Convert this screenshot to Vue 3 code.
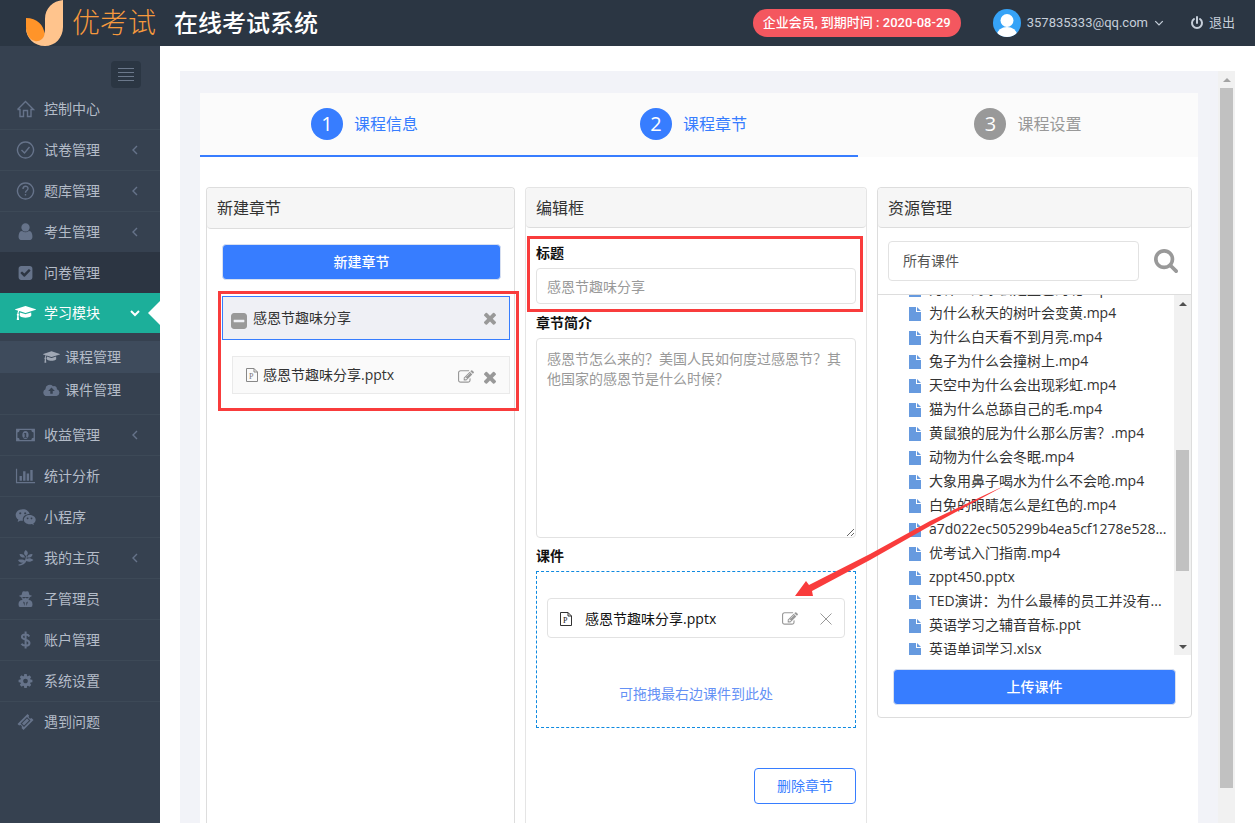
<script setup>
import { ref } from 'vue'

const icons = {
  home: { box: '0 0 18 18', line: true, d: 'M1 9.5 9 1.5l8 8H14.500V16.500H11V10.500H7V16.500H3.500V9.500H1' },
  circleCheck: { box: '0 0 18 18', line: true, d: 'M9 1a8 8 0 1 0 .01 0M5 9l3 3 5-6' },
  circleHelp: { box: '0 0 18 18', line: true, d: 'M9 1a8 8 0 1 0 .01 0M6.500 7c0-3.500 5-3.500 5-.5 0 2-2.500 2-2.500 4.200M9 12v1.600' },
  user: { box: '128 100 1536 1664', d: 'M1536 1399q0 109-62.500 187t-150.500 78h-854q-88 0-150.500-78t-62.500-187q0-85 8.500-160.500t31.500-152 58.500-131 94-89 134.500-34.500q131 128 313 128t313-128q76 0 134.500 34.500t94 89 58.500 131 31.500 152 8.500 160.500zm-256-887q0 159-112.500 271.500t-271.500 112.500-271.500-112.500-112.500-271.500 112.500-271.500 271.500-112.500 271.500 112.500 112.500 271.500z' },
  checkSquare: { box: '-104 -104 2000 2000', d: 'M813 1299l614-614q19-19 19-45t-19-45l-102-102q-19-19-45-19t-45 19l-467 467-211-211q-19-19-45-19t-45 19l-102 102q-19 19-19 45t19 45l358 358q19 19 45 19t45-19zm851-883v960q0 119-84.500 203.500t-203.500 84.500h-960q-119 0-203.500-84.500t-84.500-203.500v-960q0-119 84.500-203.500t203.500-84.500h960q119 0 203.500 84.500t84.500 203.500z' },
  minusSquare: { box: '128 128 1536 1536', d: 'M1408 960v-128q0-26-19-45t-45-19h-896q-26 0-45 19t-19 45v128q0 26 19 45t45 19h896q26 0 45-19t19-45zm256-544v960q0 119-84.500 203.500t-203.500 84.500h-960q-119 0-203.500-84.500t-84.500-203.500v-960q0-119 84.500-203.500t203.500-84.500h960q119 0 203.500 84.500t84.500 203.500z' },
  cap: { box: '0 0 2304 1792', d: 'M1774 836l18 316q4 69-82 128t-235 93.500-323 34.500-323-34.500-235-93.500-82-128l18-316 574 181q22 7 48 7t48-7zm530-324q0 23-22 31l-1120 352q-4 1-10 1t-10-1l-652-206q-43 34-71 111.500t-34 178.500q63 36 63 109 0 69-58 107l58 433q2 14-8 25-9 11-24 11h-192q-15 0-24-11-10-11-8-25l58-433q-58-38-58-107 0-73 65-111 11-207 98-330l-333-104q-22-8-22-31t22-31l1120-352q4-1 10-1t10 1l1120 352q22 8 22 31z' },
  cloud: { box: '0 0 18 14', d: 'M14.700 6.100A3 3 0 0 0 10.600 3 4.600 4.600 0 0 0 2.600 6.200 3.700 3.700 0 0 0 4 13.300H14.300A3.700 3.700 0 0 0 14.700 6.100ZM7.700 11V8H5.500L9 4.300 12.500 8H10.300V11Z' },
  money: { box: '0 0 20 14', d: 'M1 1H19V13H1ZM4.500 2.300A2.300 2.300 0 0 1 2.300 4.500V9.500A2.300 2.300 0 0 1 4.500 11.700H15.500A2.300 2.300 0 0 1 17.700 9.500V4.500A2.300 2.300 0 0 1 15.500 2.300ZM10 3.200C14 3.200 14 10.800 10 10.800S6 3.200 10 3.200ZM9.200 5L8 6.200 9.200 6V8.800H8.300V9.600H11.700V8.800H10.700V5Z' },
  chart: { box: '-100 0 2248 1792', d: 'M640 896v512h-256v-512h256zm384-512v1024h-256v-1024h256zm1024 1152v128h-2048v-1536h128v1408h1920zm-640-896v768h-256v-768h256zm384-384v1152h-256v-1152h256z' },
  chat: { box: '0 0 20 17', d: 'M7.500 1C11 1 13.500 3 14 5.700 9.800 5.700 6.600 8.700 7.600 12L5 12 2.500 13.300 3.200 11C-1.500 8 .5 1 7.500 1ZM5 4A1 1 0 1 0 5.010 4ZM9.700 4A1 1 0 1 0 9.710 4ZM13.800 6.500C20 6.500 21.500 12.500 17.500 14.500L18 16.200 16 15.200C11.500 16.200 8.300 13.500 8.400 11 8.500 8.500 10.800 6.500 13.800 6.500ZM12 8.900A.8.8 0 1 0 12.010 8.900ZM15.700 8.900A.8.8 0 1 0 15.710 8.900Z' },
  leaf: { box: '0 0 18 18', d: 'M9.300 1C12 3 12 5 9.800 7 7 5.500 7 3 9.300 1ZM3 5C6 4.500 8 6 8.500 8.500 5.500 9 3.500 8 3 5ZM16 5C15.800 8 13.500 9 10.600 8.500 11 6 13 4.800 16 5ZM9.600 7 10.300 7 10.200 10C12 8.700 14.500 9 17 11 14.500 13 12 13.200 9.800 12 9 14.500 6 16.500 2 16.500L2 15.500C4 15.300 5.500 14.700 6.500 13.600 4.500 14 2.500 13.200 1.500 11 4.500 10 7 10.600 8.500 11.500Z' },
  spy: { box: '0 0 18 18', d: 'M5 5 6 1.800Q6.500 .8 9 1.600 11.500 .8 12 1.800L13 5Q15.500 5.400 15.500 6 13 7.300 13 7.500 12.700 9.300 11.800 10 16 9.800 16 14.500 16 17 14.500 17H3.500Q2 17 2 14.500 2 9.800 6.200 10 5.300 9.300 5 7.500 5 7.300 2.500 6 2.500 5.400 5 5ZM6.500 11.500 8 16 8.300 12.500ZM11.500 11.500 9.700 12.500 10 16ZM6 7V8.300H8.200L9 7.500 9.800 8.300H12V7Z' },
  dollar: { box: '0 0 18 18', line: true, d: 'M12.800 5.500C11.500 3 5.400 2.800 5.400 6 5.400 9.200 13 8 13 12 13 15.500 6.500 15.500 5 12.800M9.100 .5V17.500' },
  cog: { box: '-104 -104 2000 2000', d: 'M1152 896q0-106-75-181t-181-75-181 75-75 181 75 181 181 75 181-75 75-181zm512-109v222q0 12-8 23t-20 13l-185 28q-19 54-39 91 35 50 107 138 10 12 10 25t-9 23q-27 37-99 108t-94 71q-12 0-26-9l-138-108q-44 23-91 38-16 136-29 186-7 28-36 28h-222q-14 0-24.500-8.500t-11.500-21.500l-28-184q-49-16-90-37l-141 107q-10 9-25 9-14 0-25-11-126-114-165-168-7-10-7-23 0-12 8-23 15-21 51-66.500t54-70.500q-27-50-41-99l-183-27q-13-2-21-12.500t-8-23.500v-222q0-12 8-23t19-13l186-28q14-46 39-92-40-57-107-138-10-12-10-24 0-10 9-23 26-36 98.500-107.500t94.500-71.500q13 0 26 10l138 107q44-23 91-38 16-136 29-186 7-28 36-28h222q14 0 24.500 8.500t11.500 21.500l28 184q49 16 90 37l142-107q9-9 24-9 13 0 25 10 129 119 165 170 7 8 7 22 0 12-8 23-15 21-51 66.500t-54 70.500q26 50 41 98l183 28q13 2 21 12.500t8 23.500z' },
  ticket: { box: '0 0 18 18', d: 'M11 1 12.600 2.600A1.700 1.700 0 0 0 15 5L17 7 7 17 5 15A1.700 1.700 0 0 0 2.600 12.600L1 11ZM10.500 4 4 10.500 7.500 14 14 7.500ZM10.500 5.500 12.500 7.500 7.500 12.500 5.500 10.500Z' },
  edit: { box: '0 0 1792 1792', d: 'M888 1184l116-116-152-152-116 116v56h96v96h56zm440-720q-16-16-33 1l-350 350q-17 17-1 33t33-1l350-350q17-17 1-33zm80 594v190q0 119-84.500 203.500t-203.500 84.500h-832q-119 0-203.500-84.500t-84.500-203.500v-832q0-119 84.500-203.500t203.500-84.500h832q63 0 117 25 15 7 18 23 3 17-9 29l-49 49q-14 14-32 8-23-6-45-6h-832q-66 0-113 47t-47 113v832q0 66 47 113t113 47h832q66 0 113-47t47-113v-126q0-13 9-22l64-64q15-15 35-7t20 29zm-96-738l288 288-672 672h-288v-288zm444 132l-92 92-288-288 92-92q28-28 68-28t68 28l152 152q28 28 28 68t-28 68z' },
  times: { box: '302 302 1188 1252', d: 'M1490 1322q0 40-28 68l-136 136q-28 28-68 28t-68-28l-294-294-294 294q-28 28-68 28t-68-28l-136-136q-28-28-28-68t28-68l294-294-294-294q-28-28-28-68t28-68l136-136q28-28 68-28t68 28l294 294 294-294q28-28 68-28t68 28l136 136q28 28 28 68t-28 68l-294 294 294 294q28 28 28 68z' },
  search: { box: '64 128 1664 1664', d: 'M1216 832q0-185-131.500-316.500t-316.500-131.500-316.500 131.500-131.500 316.500 131.500 316.500 316.500 131.500 316.500-131.500 131.500-316.500zm512 832q0 52-38 90t-90 38q-54 0-90-38l-343-342q-179 124-399 124-143 0-273.500-55.500t-225-150-150-225-55.500-273.500 55.500-273.500 150-225 225-150 273.500-55.500 273.500 55.500 225 150 150 225 55.500 273.500q0 220-124 399l343 343q37 37 37 90z' },
}

const menu = [
  { text: '控制中心', icon: 'home' },
  { text: '试卷管理', icon: 'circleCheck', more: true },
  { text: '题库管理', icon: 'circleHelp', more: true },
  { text: '考生管理', icon: 'user', more: true },
  { text: '问卷管理', icon: 'checkSquare', dark: true },
  {
    text: '学习模块', icon: 'cap', active: true,
    children: [
      { text: '课程管理', icon: 'cap', current: true },
      { text: '课件管理', icon: 'cloud' },
    ],
  },
  { text: '收益管理', icon: 'money', more: true },
  { text: '统计分析', icon: 'chart' },
  { text: '小程序', icon: 'chat' },
  { text: '我的主页', icon: 'leaf', more: true },
  { text: '子管理员', icon: 'spy' },
  { text: '账户管理', icon: 'dollar' },
  { text: '系统设置', icon: 'cog' },
  { text: '遇到问题', icon: 'ticket' },
]

const steps = [
  { text: '课程信息', done: true },
  { text: '课程章节', done: true },
  { text: '课程设置', done: false },
]

const files = [
  '为什么海水会是蓝色的呢.mp4',
  '为什么秋天的树叶会变黄.mp4',
  '为什么白天看不到月亮.mp4',
  '兔子为什么会撞树上.mp4',
  '天空中为什么会出现彩虹.mp4',
  '猫为什么总舔自己的毛.mp4',
  '黄鼠狼的屁为什么那么厉害？.mp4',
  '动物为什么会冬眠.mp4',
  '大象用鼻子喝水为什么不会呛.mp4',
  '白兔的眼睛怎么是红色的.mp4',
  'a7d022ec505299b4ea5cf1278e528...',
  '优考试入门指南.mp4',
  'zppt450.pptx',
  'TED演讲：为什么最棒的员工并没有...',
  '英语学习之辅音音标.ppt',
  '英语单词学习.xlsx',
]

const title = ref('感恩节趣味分享')
const intro = ref('感恩节怎么来的？美国人民如何度过感恩节？其他国家的感恩节是什么时候？')
</script>

<template>
  <div class="page">
    <header class="topbar">
      <a class="brand" href="#">
        <svg class="logo" viewBox="0 0 38 46" aria-hidden="true">
          <path fill="#ffc48d" d="M37 0V27C37 38 29 46 19 46C8 46 0 38 0 28C4 37 19 42 19 29V19C19 8 27 1 37 0Z" />
          <path fill="#ff9429" d="M0 18C11 18 18 25 18.500 34C18 39 13 42 9 41C3 40 0 33 0 27Z" />
        </svg>
        <span class="brand-name">优考试</span>
      </a>
      <h1>在线考试系统</h1>
      <span class="plan">企业会员, 到期时间 : 2020-08-29</span>
      <button class="account" type="button">
        <svg class="avatar" viewBox="0 0 28 28" aria-hidden="true">
          <defs><clipPath id="face"><circle cx="14" cy="14" r="14" /></clipPath></defs>
          <g clip-path="url(#face)">
            <rect width="28" height="28" fill="#36a3f7" />
            <circle cx="14" cy="11.500" r="6.500" fill="#fff" />
            <ellipse cx="14" cy="26" rx="10" ry="8" fill="#fff" />
          </g>
        </svg>
        <span>357835333@qq.com</span>
        <svg class="caret" viewBox="0 0 8 8" aria-hidden="true"><path d="M1 2.500 4 5.500 7 2.500" /></svg>
      </button>
      <a class="logout" href="#">
        <svg viewBox="0 0 14 14" aria-hidden="true"><path d="M4 3A5 5 0 1 0 10 3M7 1V7" /></svg>
        退出
      </a>
    </header>

    <div class="body">
      <nav class="sidebar" aria-label="主菜单">
        <button class="toggle" type="button" aria-label="折叠菜单"><i></i><i></i><i></i><i></i></button>
        <ul class="menu">
          <li v-for="item in menu" :key="item.text" :class="{ active: item.active, dark: item.dark }">
            <a class="entry" href="#">
              <svg class="icon" :class="{ line: icons[item.icon].line, ['i-' + item.icon]: true }" :viewBox="icons[item.icon].box" aria-hidden="true">
                <path :d="icons[item.icon].d" fill-rule="evenodd" />
              </svg>
              <span>{{ item.text }}</span>
              <svg v-if="item.more" class="arrow" viewBox="0 0 10 10" aria-hidden="true"><path d="M7 1 3 5 7 9" /></svg>
              <svg v-if="item.active" class="arrow" viewBox="0 0 10 10" aria-hidden="true"><path d="M1 3 5 7 9 3" /></svg>
            </a>
            <ul v-if="item.children" class="submenu">
              <li v-for="sub in item.children" :key="sub.text">
                <a href="#" :class="{ current: sub.current }">
                  <svg class="sub-icon" :viewBox="icons[sub.icon].box" aria-hidden="true"><path :d="icons[sub.icon].d" fill-rule="evenodd" /></svg>
                  {{ sub.text }}
                </a>
              </li>
            </ul>
          </li>
        </ul>
      </nav>

      <main class="frame">
        <div class="content">
          <ol class="steps">
            <li v-for="(step, i) in steps" :key="step.text" :class="{ done: step.done }">
              <b>{{ i + 1 }}</b>{{ step.text }}
            </li>
          </ol>

          <div class="columns">
            <section class="panel chapters">
              <h2>新建章节</h2>
              <button class="primary" type="button">新建章节</button>
              <div class="tree">
                <div class="chapter">
                  <svg class="minus" :viewBox="icons.minusSquare.box" aria-hidden="true"><path :d="icons.minusSquare.d" /></svg>
                  <span>感恩节趣味分享</span>
                  <button class="glyph" type="button" aria-label="删除章节"><svg class="times" :viewBox="icons.times.box"><path :d="icons.times.d" /></svg></button>
                </div>
                <div class="lesson">
                  <svg class="doc" viewBox="0 0 12 14" aria-hidden="true"><path d="M.5 .5H8L11.500 4V13.500H.5ZM8 .5V4H11.500" /><text x="3" y="11">P</text></svg>
                  <span>感恩节趣味分享.pptx</span>
                  <button class="glyph" type="button" aria-label="编辑课件"><svg class="edit" :viewBox="icons.edit.box"><path :d="icons.edit.d" /></svg></button>
                  <button class="glyph" type="button" aria-label="移除课件"><svg class="times" :viewBox="icons.times.box"><path :d="icons.times.d" /></svg></button>
                </div>
              </div>
            </section>

            <section class="panel editor">
              <h2>编辑框</h2>
              <div class="field marked">
                <label for="title">标题</label>
                <input id="title" v-model="title" type="text">
              </div>
              <div class="field">
                <label for="intro">章节简介</label>
                <textarea id="intro" v-model="intro"></textarea>
              </div>
              <h3>课件</h3>
              <div class="drop">
                <div class="dropped">
                  <svg class="doc" viewBox="0 0 12 14" aria-hidden="true"><path d="M.5 .5H8L11.500 4V13.500H.5ZM8 .5V4H11.500" /><text x="3" y="11">P</text></svg>
                  <span>感恩节趣味分享.pptx</span>
                  <button class="glyph" type="button" aria-label="编辑课件"><svg class="edit" :viewBox="icons.edit.box"><path :d="icons.edit.d" /></svg></button>
                  <button class="glyph" type="button" aria-label="移除课件"><svg class="cross" viewBox="0 0 12 12"><path d="M.5 .5 11.500 11.500M11.500 .5 .5 11.500" /></svg></button>
                  <svg class="pointer" viewBox="0 0 212 112" aria-hidden="true"><path d="M0 111 11 96 14 100 75 69 135 36 211 0 135 41 75 75 17 106 18 111Z" /></svg>
                </div>
                <p>可拖拽最右边课件到此处</p>
              </div>
              <button class="outline" type="button">删除章节</button>
            </section>

            <section class="panel resources">
              <h2>资源管理</h2>
              <div class="filter">
                <select aria-label="课件分类"><option>所有课件</option></select>
                <button class="glyph" type="button" aria-label="搜索"><svg class="search" :viewBox="icons.search.box"><path :d="icons.search.d" /></svg></button>
              </div>
              <div class="list">
                <ul>
                  <li v-for="file in files" :key="file">
                    <svg viewBox="0 0 12 14" aria-hidden="true"><path d="M0 0H7V5H12V14H0ZM8 0 12 4H8Z" /></svg>
                    <span>{{ file }}</span>
                  </li>
                </ul>
                <div class="bar inner"><i class="up"></i><i class="thumb"></i><i class="down"></i></div>
              </div>
              <button class="primary" type="button">上传课件</button>
            </section>
          </div>
        </div>
        <div class="bar outer"><i class="up"></i><i class="thumb"></i></div>
      </main>
    </div>
  </div>
</template>

<style>
body { margin: 0; }
</style>

<style scoped>
* { box-sizing: border-box; }
.page {
  height: 100vh;
  display: flex;
  flex-direction: column;
  overflow: hidden;
  background: #fff;
  color: #333;
  font: 14px/20px "Open Sans", "Noto Sans CJK SC", sans-serif;
}
button, input, textarea, select { font: inherit; color: inherit; margin: 0; }
button { padding: 0; border: 0; background: none; cursor: pointer; }
a { color: inherit; text-decoration: none; }
ul, ol { list-style: none; margin: 0; padding: 0; }
h1, h2, h3, p { margin: 0; }
svg { display: block; flex: none; fill: currentColor; }

.topbar {
  flex: none;
  height: 46px;
  padding: 0 20px 0 26px;
  display: flex;
  align-items: center;
  background: #2b3643;
  color: #c6cfda;
  font-family: Roboto, "Noto Sans CJK SC", sans-serif;
  font-size: 13px;
}
.brand { display: flex; align-items: center; gap: 8px; color: #f6993d; }
.logo { width: 38px; height: 46px; }
.brand-name { padding-top: 2px; font-size: 28px; font-weight: 300; line-height: 44px; }
h1 { margin-left: 18px; padding-top: 2px; font-size: 24px; font-weight: 500; line-height: 44px; color: #fff; }
.plan {
  margin-left: auto;
  padding: 0 10px;
  line-height: 28px;
  border-radius: 14px;
  background: #f4575f;
  color: #fff;
  font-weight: 500;
}
.account { margin-left: 32px; display: flex; align-items: center; gap: 6px; }
.avatar { width: 28px; height: 28px; }
.caret { width: 10px; height: 10px; fill: none; stroke: currentColor; }
.logout { margin-left: 26px; display: flex; align-items: center; gap: 5px; }
.logout svg { width: 14px; height: 14px; fill: none; stroke: currentColor; stroke-width: 2; stroke-linecap: round; }

.body { flex: 1; min-height: 0; display: flex; }
.sidebar { flex: none; width: 160px; background: #364150; color: #b4bcc8; }
.toggle {
  margin: 15px 19px 0 auto;
  width: 30px;
  height: 27px;
  display: flex;
  flex-direction: column;
  align-items: center;
  justify-content: center;
  gap: 3px;
  border-radius: 4px;
  background: #2b3643;
}
.toggle i { width: 16px; height: 1px; background: #6b788b; }
.menu > li { border-top: 1px solid #3d4957; }
.menu > li:first-child { border-color: transparent; }
.menu > .dark { background: #2c3542; border-color: #2c3542; }
.menu > .active { border: 0; }
.entry { height: 40px; padding: 0 20px 0 15px; display: flex; align-items: center; gap: 8px; }
.icon { width: 21px; height: 18px; color: #66738a; }
.line { fill: none; stroke: currentColor; stroke-width: 1.4; }
.i-dollar { stroke-width: 2; }
.arrow { width: 10px; height: 10px; margin-left: auto; fill: none; stroke: #66738a; stroke-width: 1.4; }
.active .entry { position: relative; background: #1caf9a; color: #fff; }
.active .entry .icon { color: #fff; }
.active .entry .arrow { stroke: #fff; stroke-width: 2; }
.active .entry::after {
  content: "";
  position: absolute;
  right: 0;
  top: 8px;
  border: 12px solid transparent;
  border-left: 0;
  border-right-color: #fff;
}
.submenu { padding: 8px 0; display: grid; gap: 1px; }
.submenu a { height: 32px; padding-left: 43px; display: flex; align-items: center; gap: 5px; }
.submenu .current { background: #3e4b5c; }
.sub-icon { width: 17px; height: 14px; color: #66738a; }
.current .sub-icon { color: #a0a8b5; }

.frame { flex: 1; min-width: 0; margin: 25px 20px 0; display: flex; background: #f2f3f8; }
.content { flex: 1; min-width: 0; margin: 22px 20px 0; display: flex; flex-direction: column; background: #fff; }
.steps { flex: none; height: 64px; display: flex; background: #fbfbfb; font-size: 16px; color: #999; }
.steps li { flex: 340; display: flex; align-items: center; justify-content: center; gap: 11px; border-bottom: 2px solid transparent; }
.steps .done { flex: 329; color: #377dff; border-color: #377dff; }
.steps b { width: 32px; line-height: 32px; border-radius: 50%; background: #999; color: #fff; font-size: 20px; font-weight: 400; text-align: center; }
.steps .done b { background: #377dff; }

.columns { flex: 1; min-height: 0; margin: 30px 6px 0; display: flex; align-items: stretch; gap: 10px; }
.panel { min-width: 0; flex: 342 1 0; border: 1px solid #ddd; border-bottom: 0; border-radius: 4px 4px 0 0; }
.panel h2 {
  height: 40px;
  padding: 0 10px;
  border-bottom: 1px solid #ddd;
  border-radius: 4px;
  background: #f6f6f6;
  font-size: 16px;
  font-weight: 400;
  line-height: 40px;
}
.chapters { flex-grow: 309; }
.chapters h2 { height: 41px; }
.editor { border-color: #e5e5e5; }
.resources { flex-grow: 315; align-self: flex-start; border-bottom: 1px solid #ddd; border-radius: 4px; }
.primary { display: block; height: 36px; border: 1px solid #d8e0f0; border-radius: 4px; background: #377dff; color: #fff; font-weight: 500; }
.glyph { display: flex; color: #999; }

.chapters .primary { width: calc(100% - 28px); margin: 15px 13px 16px 15px; }
.tree { position: relative; margin: 0 4px 0 15px; }
.tree::after { content: ""; position: absolute; inset: -5px -9px -17px -4px; border: 3px solid #f93c3c; pointer-events: none; }
.chapter { height: 44px; padding: 0 13px 0 8px; display: flex; align-items: center; gap: 6px; border: 1px solid #377dff; background: #eff0f5; }
.chapter span, .lesson span, .dropped span { flex: 1; }
.minus { width: 16px; height: 16px; margin-top: 6px; color: #999; }
.times { width: 12px; height: 13px; }
.edit { width: 16px; height: 16px; }
.lesson { height: 38px; margin: 16px 0 0 10px; padding: 0 13px; display: flex; align-items: center; gap: 10px; border: 1px solid #eaeaea; background: #fafafa; }
.lesson span { margin-left: -5px; }
.lesson .glyph { margin-top: 4px; }
.doc { width: 12px; height: 14px; fill: none; stroke: #888; }
.doc text { fill: #777; stroke: none; font: 8px "Liberation Serif", serif; }

.editor { padding-bottom: 19px; }
.editor h2 { margin-bottom: 15px; }
.field { position: relative; margin: 0 10px 8px; }
.field label, h3 { display: block; height: 20px; margin-bottom: 5px; font-size: 14px; font-weight: 700; line-height: 20px; color: #111; }
.field input, .field textarea { display: block; width: 100%; border: 1px solid #e2e2e2; border-radius: 4px; background: #fff; color: #999; padding: 0 10px; outline: 0; }
.field input { height: 36px; }
.field textarea { height: 200px; padding: 10px; line-height: 20px; resize: vertical; }
.marked { margin-bottom: 9px; }
.marked::after { content: ""; position: absolute; inset: -7px -7px -8px -9px; border: 3px solid #f93c3c; pointer-events: none; }
h3 { margin: 0 10px 5px; }
.drop { height: 157px; margin: 0 10px; padding: 26px 10px 0; border: 1px dashed #0f8ae0; }
.dropped { position: relative; height: 40px; padding: 2px 12px 0; display: flex; align-items: center; gap: 13px; border: 1px solid #e2e2e2; border-radius: 4px; color: #111; }
.dropped .doc { stroke: #333; }
.dropped .doc text { fill: #111; }
.dropped .glyph + .glyph { margin-left: 9px; }
.cross { width: 12px; height: 12px; stroke: currentColor; }
.pointer { position: absolute; z-index: 2; left: 247px; top: -114px; width: 212px; height: 112px; color: #f93c3c; pointer-events: none; }
.drop p { margin-top: 46px; text-align: center; color: #6591f5; }
.outline { display: block; margin: 40px 10px 0 auto; width: 102px; height: 36px; border: 1px solid #377dff; border-radius: 4px; color: #377dff; }

.filter { padding: 13px; padding-left: 10px; display: flex; align-items: center; gap: 15px; border-bottom: 1px solid #ddd; }
.filter select { flex: 1; min-width: 0; height: 40px; padding: 0 14px; appearance: none; border: 1px solid #e2e2e2; border-radius: 4px; background: #fff; color: #555; }
.search { width: 24px; height: 24px; }
.list { height: 360px; display: flex; overflow: hidden; }
.list ul { flex: 1; min-width: 0; margin-top: -18px; padding-left: 31px; }
.list li { height: 24px; display: flex; align-items: center; gap: 8px; white-space: nowrap; }
.list li svg { width: 12px; height: 14px; margin-top: 2px; color: #669adf; }
.resources .primary { width: calc(100% - 30px); margin: 14px 15px 12px; }

.bar { flex: none; width: 17px; display: flex; flex-direction: column; align-items: center; background: #f1f1f1; color: #505050; }
.bar .up, .bar .down { border: 4px solid transparent; }
.bar .up { margin: 3px 0 6px; border-bottom-color: currentColor; }
.bar .down { margin: auto 0 2px; border-top-color: currentColor; }
.thumb { width: 13px; background: #c1c1c1; }
.inner .thumb { height: 121px; margin-top: 138px; }
.outer { color: #a3a3a3; }
.outer .thumb { height: 700px; }
</style>
